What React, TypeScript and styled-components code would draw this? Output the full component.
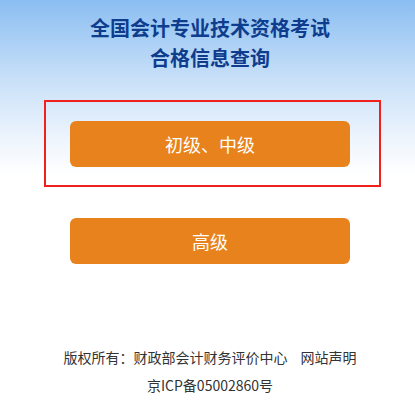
import React from 'react';
import styled, { createGlobalStyle } from 'styled-components';

const GlobalStyle = createGlobalStyle`
  html, body {
    margin: 0;
    padding: 0;
    background: #fff;
  }
  body {
    font-family: "Microsoft YaHei", "Noto Sans CJK SC", "Noto Sans", sans-serif;
  }
`;

const Page = styled.div`
  width: 415px;
  height: 410px;
  box-sizing: border-box;
  padding-left: 5px;
  background: linear-gradient(180deg, #8bbef2 0px, #c9e0f8 80px, #eef5fd 140px, #ffffff 175px);
  display: flex;
  flex-direction: column;
  align-items: center;
  overflow: hidden;
`;

const Title = styled.h1`
  margin: 13px 0 0;
  font-size: 20px;
  line-height: 30px;
  font-weight: 700;
  color: #0e3d8e;
  text-align: center;
`;

const Highlight = styled.div`
  box-sizing: border-box;
  width: 337px;
  margin: 27px 0 0 5px;
  padding: 19px 5px 18px 0;
  border: 2px solid #f0201c;
  display: flex;
  justify-content: center;
`;

const LevelButton = styled.a<{ $top?: number }>`
  display: flex;
  align-items: center;
  justify-content: center;
  width: 280px;
  height: 46px;
  margin-top: ${(p) => p.$top ?? 0}px;
  border-radius: 6px;
  background: #e8821c;
  color: #fff;
  font-size: 18px;
  text-decoration: none;
  cursor: pointer;
`;

const Footer = styled.footer`
  margin-top: 79px;
  font-size: 14px;
  line-height: 28px;
  color: #333;
  text-align: center;
`;

const FooterLine = styled.div`
  display: flex;
  justify-content: center;
  gap: 13px;
`;

export default function App() {
  return (
    <>
      <GlobalStyle />
      <Page>
        <Title>
          全国会计专业技术资格考试
          <br />
          合格信息查询
        </Title>
        <Highlight>
          <LevelButton>初级、中级</LevelButton>
        </Highlight>
        <LevelButton $top={31}>高级</LevelButton>
        <Footer>
          <FooterLine>
            <span>版权所有：财政部会计财务评价中心</span>
            <span>网站声明</span>
          </FooterLine>
          <FooterLine>京ICP备05002860号</FooterLine>
        </Footer>
      </Page>
    </>
  );
}
